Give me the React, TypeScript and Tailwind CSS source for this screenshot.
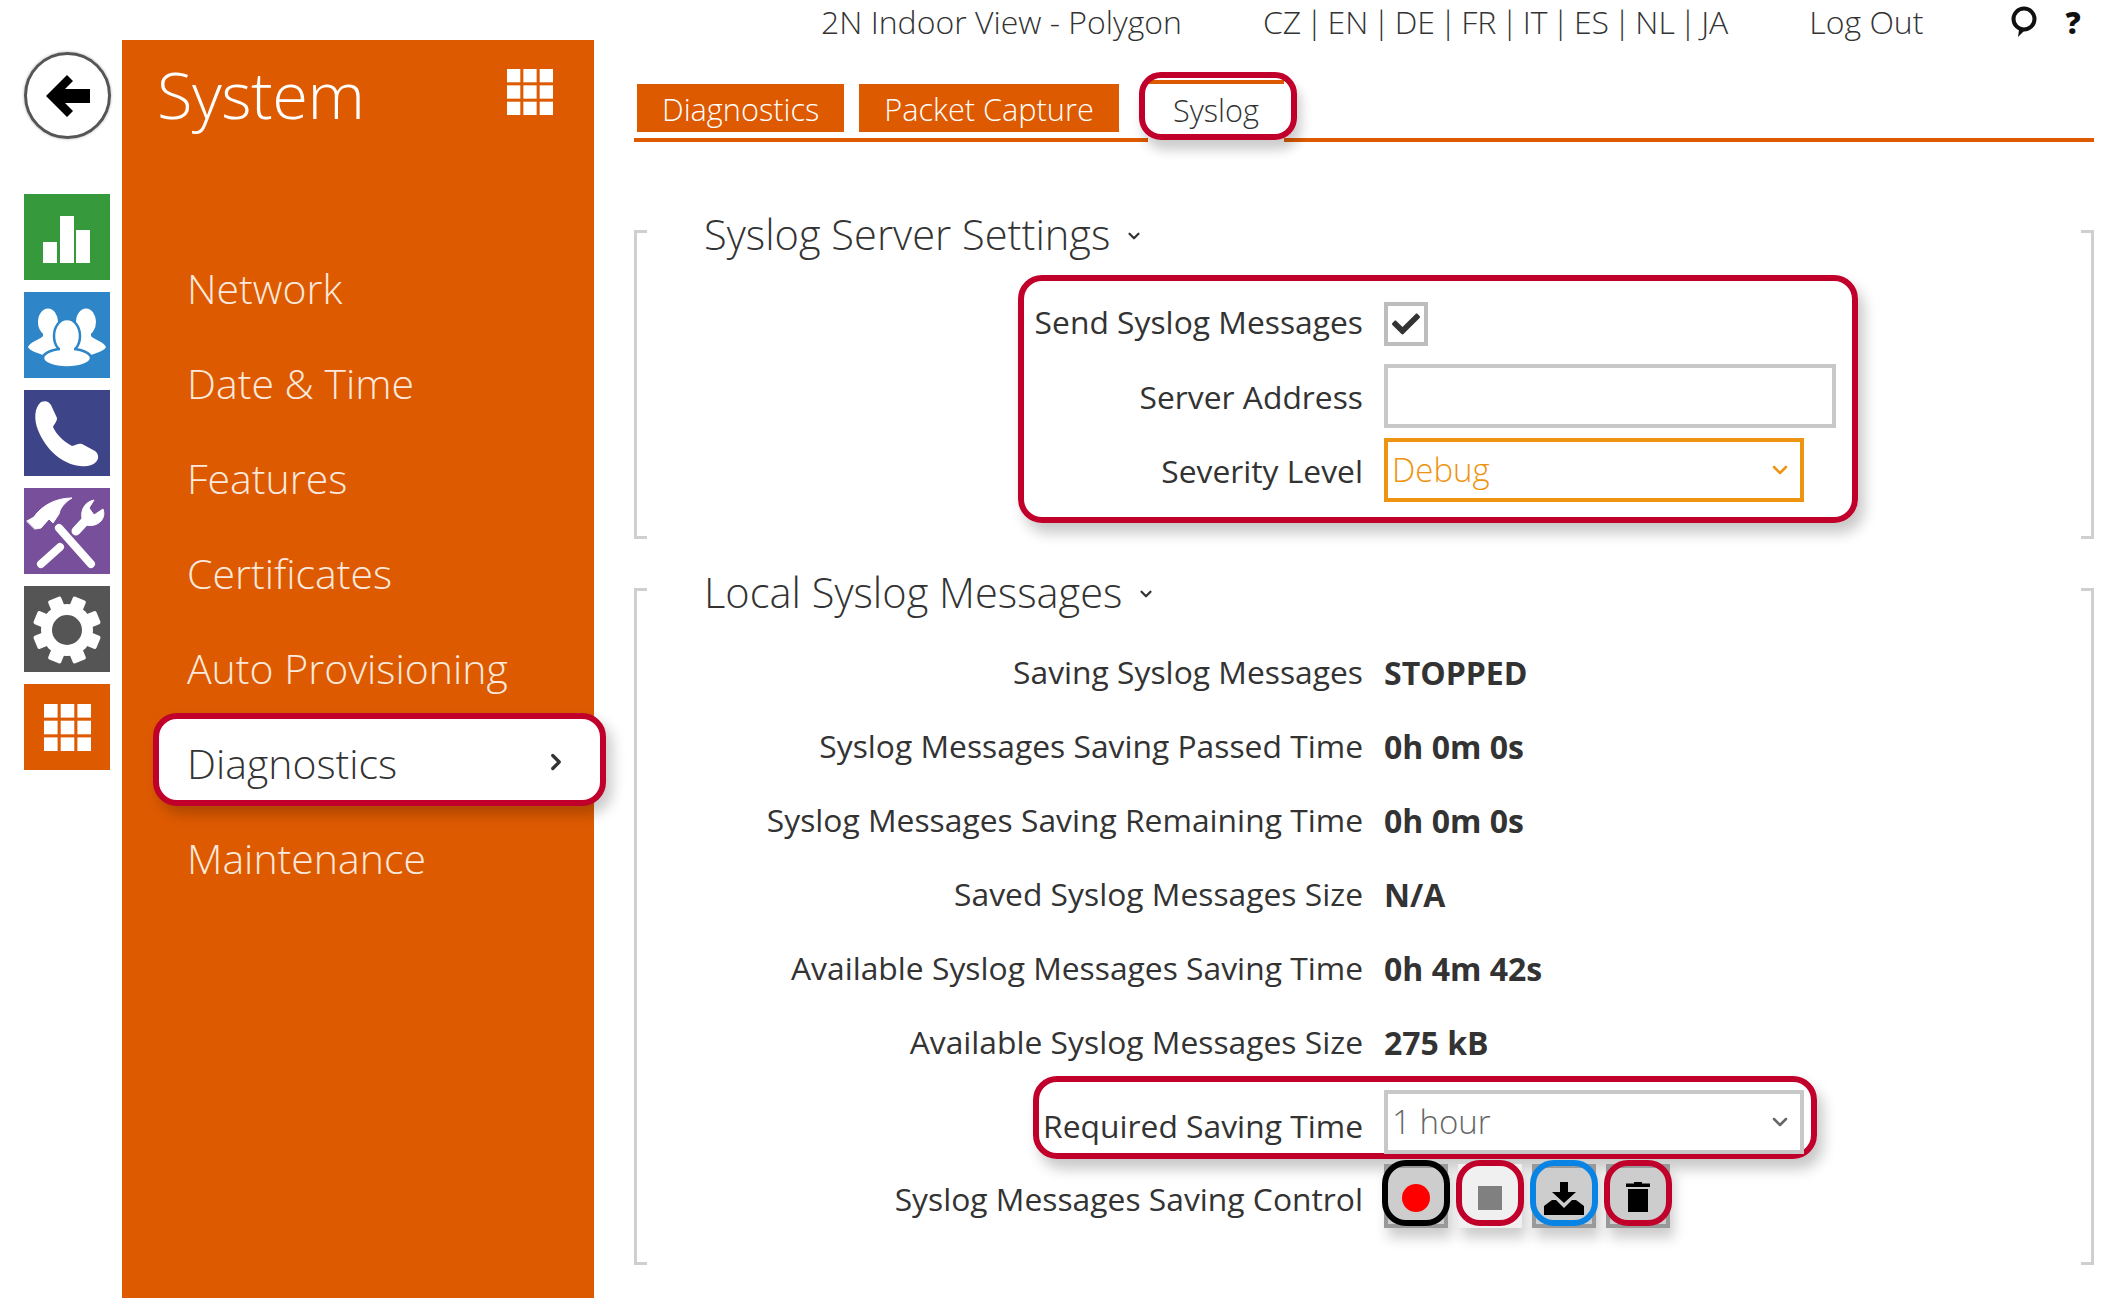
import { ChevronDown, ChevronRight } from "lucide-react";
import { FaCheck } from "react-icons/fa";

const NAV = ["Network", "Date & Time", "Features", "Certificates", "Auto Provisioning", "Diagnostics", "Maintenance"];

const STATUS = [
  { label: "Saving Syslog Messages", value: "STOPPED" },
  { label: "Syslog Messages Saving Passed Time", value: "0h 0m 0s" },
  { label: "Syslog Messages Saving Remaining Time", value: "0h 0m 0s" },
  { label: "Saved Syslog Messages Size", value: "N/A" },
  { label: "Available Syslog Messages Saving Time", value: "0h 4m 42s" },
  { label: "Available Syslog Messages Size", value: "275 kB" },
];

function GridIcon({ className, fill = "#fff" }: { className: string; fill?: string }) {
  const cells = [0, 16.7, 33.4];
  return (
    <svg viewBox="0 0 47 47" className={className}>
      {cells.map((y) => cells.map((x) => <rect key={`${x}-${y}`} x={x} y={y} width="13.6" height="13.6" fill={fill} />))}
    </svg>
  );
}

function BarsIcon() {
  return (
    <svg viewBox="0 0 86 86" className="size-full" fill="#fff">
      <rect x="19" y="48" width="14" height="21" />
      <rect x="36" y="22" width="14" height="47" />
      <rect x="52" y="36" width="14" height="33" />
    </svg>
  );
}

function UsersIcon() {
  return (
    <svg viewBox="0 0 86 86" className="size-full" fill="#fff">
      <ellipse cx="24" cy="30" rx="10" ry="13.5" />
      <ellipse cx="62" cy="30" rx="10" ry="13.5" />
      <path d="M19 38h10v8l8 9-13 9C14 62 5 58 4 55c2-5 13-8 15-11z" />
      <path d="M67 38H57v8l-8 9 13 9c10-2 19-6 20-9-2-5-13-8-15-11z" />
      <g stroke="#2e86c9" strokeWidth="2.5">
        <ellipse cx="43" cy="44" rx="13" ry="17" />
        <ellipse cx="43" cy="66" rx="24" ry="9.5" />
      </g>
      <rect x="36" y="52" width="14" height="10" />
    </svg>
  );
}

function PhoneIcon() {
  return (
    <svg viewBox="0 0 86 86" className="size-full" fill="#fff">
      <path d="M17 12C22 10 25 12 27 15L33 28C33 32 30 34 29 37C32 44 39 51 48 56C51 56 54 53 58 54L71 61C75 64 75 69 72 72C68 76 62 77 56 76C38 74 22 60 14 40C10 30 10 18 17 12Z" />
    </svg>
  );
}

function ToolsIcon() {
  return (
    <svg viewBox="0 0 86 86" className="size-full" fill="#fff" stroke="#fff" strokeLinecap="round" strokeLinejoin="round">
      <path strokeWidth="1" d="M3 33L10 29L13 25C22 15 35 10 48 10C41 14 36 20 35 26L29 35L25 31L17 40L11 41Z" />
      <path strokeWidth="8" fill="none" d="M35 40L67 76" />
      <path strokeWidth="8" fill="none" d="M17 76L36 59" />
      <path strokeWidth="9" fill="none" d="M52 43L64 30" />
      <path strokeWidth="1" d="M59 34C55 24 60 14 70 12L65 20L70 27L79 21C83 32 72 40 62 37Z" />
    </svg>
  );
}

function GearIcon() {
  return (
    <svg viewBox="0 0 86 86" className="size-full">
      <g transform="translate(43 44)" fill="#fff">
        {[0, 45, 90, 135, 180, 225, 270, 315].map((a) => (
          <rect key={a} x="-7" y="-34" width="14" height="14" rx="2" transform={`rotate(${a + 22.5})`} />
        ))}
        <circle r="20.5" fill="none" stroke="#fff" strokeWidth="11" />
      </g>
    </svg>
  );
}

function Tile({ color, children }: { color: string; children: React.ReactNode }) {
  return <div className={`size-[86px] ${color}`}>{children}</div>;
}

function Section({ title, className, headClass, children }: { title: string; className: string; headClass: string; children: React.ReactNode }) {
  return (
    <section className={`relative flex flex-col border-x-[3px] border-[#cfcfcf] ${className}`}>
      <span className="absolute -left-[3px] top-0 h-[3px] w-[13px] bg-[#cfcfcf]" />
      <span className="absolute -left-[3px] bottom-0 h-[3px] w-[13px] bg-[#cfcfcf]" />
      <span className="absolute -right-[3px] top-0 h-[3px] w-[13px] bg-[#cfcfcf]" />
      <span className="absolute -right-[3px] bottom-0 h-[3px] w-[13px] bg-[#cfcfcf]" />
      <h2 className={`flex h-12 shrink-0 items-center gap-[15px] pl-[67px] text-[41.6px] font-light text-[#333] ${headClass}`}>
        {title}
        <ChevronDown size={18} strokeWidth={3} className="mt-1" />
      </h2>
      {children}
    </section>
  );
}

function Row({ label, className = "", labelClass = "", children }: { label: string; className?: string; labelClass?: string; children: React.ReactNode }) {
  return (
    <div className={`flex items-center gap-[21px] ${className}`}>
      <div className={`relative z-10 w-[726px] shrink-0 text-right text-[31.8px] text-[#333] ${labelClass}`}>{label}</div>
      {children}
    </div>
  );
}

function Outline({ className }: { className: string }) {
  return <div className={`pointer-events-none absolute rounded-[24px] border-[6px] border-[#c0002a] shadow-[6px_10px_14px_rgba(0,0,0,0.22)] ${className}`} />;
}

function SelectBox({ text, className }: { text: string; className: string }) {
  return (
    <div className={`relative z-10 flex h-[64px] w-[420px] items-center justify-between border-4 bg-white pl-1 pr-2 text-[33px] font-light ${className}`}>
      {text}
      <ChevronDown size={24} strokeWidth={2.5} />
    </div>
  );
}

function ControlButton({ outline, light, children }: { outline: string; light?: boolean; children: React.ReactNode }) {
  return (
    <div className={`relative size-16 border-4 ${light ? "border-[#f0f0f0] bg-[#f0f0f0]" : "border-[#999] bg-[#cdcdcd]"} shadow-[4px_10px_12px_rgba(0,0,0,0.2)]`}>
      <svg viewBox="0 0 64 64" className="absolute -left-1 -top-1 size-16">
        {children}
      </svg>
      <div className={`absolute -left-[6px] -right-[6px] -top-[8px] -bottom-[2px] rounded-[24px] border-[6px] ${outline}`} />
    </div>
  );
}

export default function App() {
  return (
    <div className="relative flex h-[1298px] w-[2118px] overflow-hidden bg-white font-['Open_Sans',sans-serif] text-[#333]">
      {/* icon rail */}
      <div className="flex w-[122px] shrink-0 flex-col pl-6 pt-[52px]">
        <div className="flex size-[87px] items-center justify-center rounded-full border-[3px] border-[#555] shadow-[0_0_3px_rgba(0,0,0,0.3)]">
          <svg viewBox="0 0 44 44" className="size-[44px]" fill="#000">
            <path d="M0 22L21 1L27 7L19 15H44V29H19L27 37L21 43Z" />
          </svg>
        </div>
        <div className="mt-[55px] flex flex-col gap-3">
          <Tile color="bg-[#36993b]"><BarsIcon /></Tile>
          <Tile color="bg-[#2e86c9]"><UsersIcon /></Tile>
          <Tile color="bg-[#3e4488]"><PhoneIcon /></Tile>
          <Tile color="bg-[#784f9a]"><ToolsIcon /></Tile>
          <Tile color="bg-[#555555]"><GearIcon /></Tile>
          <Tile color="bg-[#de5a00]">
            <div className="flex size-full items-center justify-center">
              <GridIcon className="size-[47px]" />
            </div>
          </Tile>
        </div>
      </div>

      {/* menu */}
      <aside className="mt-10 w-[472px] shrink-0 bg-[#de5a00]">
        <div className="flex h-[201px] items-start justify-between pl-[35px] pr-[41px]">
          <h1 className="mt-[14px] text-[65px] font-light leading-[80px] tracking-[-0.5px] text-white">System</h1>
          <GridIcon className="mt-[29px] size-[46px]" />
        </div>
        <nav className="flex flex-col">
          {NAV.map((item) => (
            <div key={item} className={`relative flex h-[95.1px] items-center pl-[65px] text-[41px] font-light ${item === "Diagnostics" ? "text-[#333]" : "text-[#fbe9dd]"}`}>
              {item === "Diagnostics" && <div className="absolute -right-3 left-[31px] top-[-3.5px] h-[93px] rounded-[24px] border-[6px] border-[#c0002a] bg-white shadow-[6px_8px_14px_rgba(0,0,0,0.22)]" />}
              <span className="relative">{item}</span>
              {item === "Diagnostics" && <ChevronRight size={26} strokeWidth={3} className="absolute right-[25px] top-[33px]" />}
            </div>
          ))}
        </nav>
      </aside>

      {/* content */}
      <main className="min-w-0 flex-1 pl-10 pr-6">
        <header className="flex h-[44px] items-center pl-[187px] text-[32px] font-light whitespace-nowrap">
          <span>2N Indoor View - Polygon</span>
          <span className="ml-[81px] [word-spacing:-3.8px]">CZ | EN | DE | FR | IT | ES | NL | JA</span>
          <span className="ml-[81px]">Log Out</span>
          <svg viewBox="0 0 28 32" className="ml-[87px] h-8 w-7" fill="none" stroke="#111" strokeWidth="4">
            <circle cx="14" cy="13" r="10.5" />
            <path d="M9 24L8 31L15 24" fill="#111" stroke="none" />
          </svg>
          <span className="ml-[27px] text-[30px] font-extrabold text-[#111]">?</span>
        </header>

        <div className="mt-10 flex h-[54px] items-start gap-[15px] pl-[3px]">
          <div className="flex h-12 items-center bg-[#de5a00] px-[25px] pt-[3px] text-[30.7px] font-light text-white">Diagnostics</div>
          <div className="flex h-12 items-center bg-[#de5a00] px-[25px] pt-[3px] text-[30.7px] font-light text-white">Packet Capture</div>
        </div>
        <div className="relative h-1 bg-[#de5a00]">
          <div className="absolute bottom-0 left-[514px] h-[62px] w-[136px] border-t-4 border-[#de5a00] bg-white pt-[3px] text-center text-[30.7px] font-light">Syslog</div>
          <div className="pointer-events-none absolute bottom-[2px] left-[505px] h-[68px] w-[158px] rounded-[22px] border-[6px] border-[#c0002a] shadow-[4px_10px_12px_rgba(0,0,0,0.2)]" />
        </div>

        <Section title="Syslog Server Settings" className="mt-[88px] h-[309px]" headClass="-mt-[20px]">
          <div className="h-[44px] shrink-0" />
          <Outline className="left-[381px] top-[45px] h-[248px] w-[840px]" />
          <Row label="Send Syslog Messages" className="h-[44px]" labelClass="-mt-[4px]">
            <div className="relative z-10 flex size-11 items-center justify-center border-4 border-[#bdbdbd] bg-white">
              <FaCheck size={28} color="#333" />
            </div>
          </Row>
          <Row label="Server Address" className="mt-[18px] h-[64px]" labelClass="pt-[2px]">
            <div className="relative z-10 h-[64px] w-[452px] border-4 border-[#c8c8c8] bg-white" />
          </Row>
          <Row label="Severity Level" className="mt-[10px] h-[64px]" labelClass="pt-[2px]">
            <SelectBox text="Debug" className="border-[#ee9411] text-[#ee9411]" />
          </Row>
        </Section>

        <Section title="Local Syslog Messages" className="mt-[49px] h-[677px]" headClass="-mt-[20px]">
          <div className="h-[20px] shrink-0" />
          <Outline className="left-[396px] top-[488px] h-[83px] w-[784px]" />
          {STATUS.map((row) => (
            <Row key={row.label} label={row.label} className="h-[74px]" labelClass="-mt-[2px]">
              <span className="text-[32px] font-bold text-[#333]">{row.value}</span>
            </Row>
          ))}
          <Row label="Required Saving Time" className="mt-[10px] h-[64px]" labelClass="pt-[7px]">
            <SelectBox text="1 hour" className="border-[#c8c8c8] text-[#666]" />
          </Row>
          <Row label="Syslog Messages Saving Control" className="mt-[10px] h-[64px]" labelClass="pt-[6px]">
            <div className="flex gap-[10px]">
              <ControlButton outline="border-black">
                <circle cx="32" cy="34" r="14" fill="#ff0000" />
              </ControlButton>
              <ControlButton outline="border-[#c0002a]" light>
                <rect x="20" y="22" width="24" height="24" fill="#808080" />
              </ControlButton>
              <ControlButton outline="border-[#0a84e4]">
                <path d="M28 18h8v10h8L32 39 20 28h8z M12 42l8-6h4l8 8 8-8h4l8 6v9H12z" fill="#000" />
              </ControlButton>
              <ControlButton outline="border-[#c0002a]">
                <path d="M28 18h8v1.5h8V23H20v-3.5h8z M22 25h20v23H22z" fill="#000" />
              </ControlButton>
            </div>
          </Row>
        </Section>
      </main>
    </div>
  );
}
